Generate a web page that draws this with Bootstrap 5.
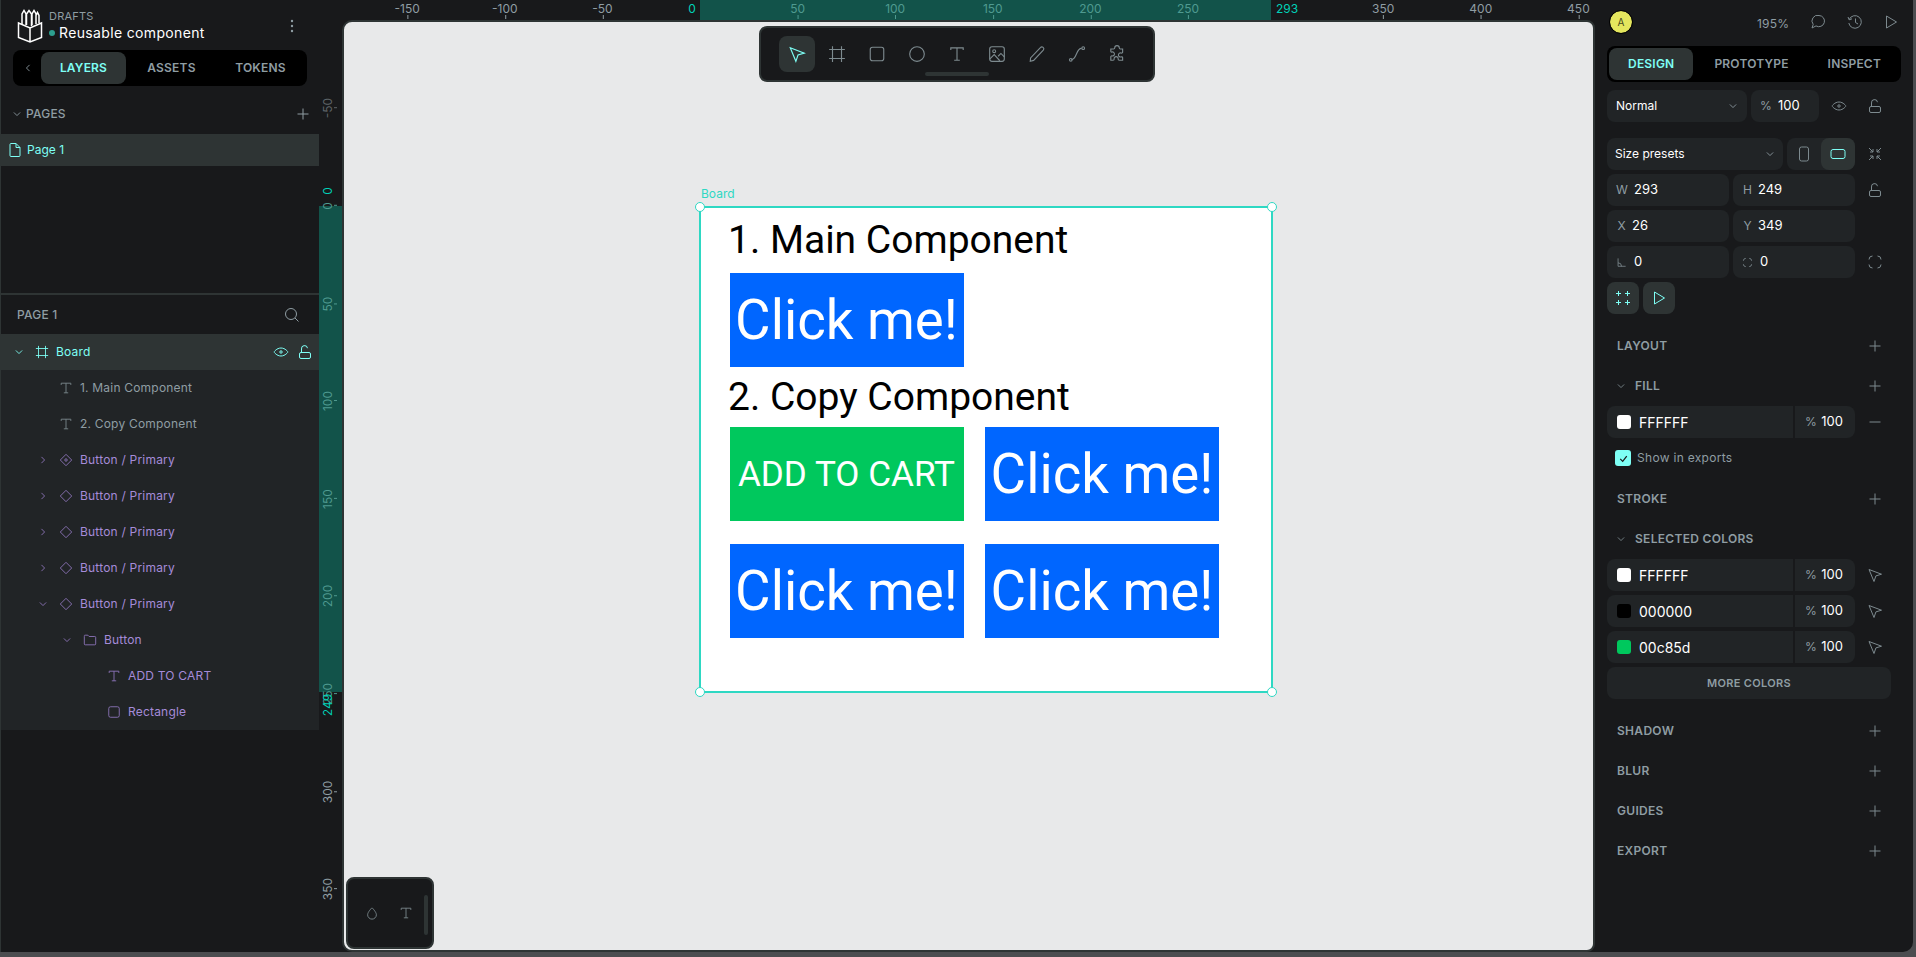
<!DOCTYPE html>
<html lang="en">

<head>
    <meta charset="UTF-8">
    <title>Reusable component</title>
    <link href="https://cdn.jsdelivr.net/npm/bootstrap@5.3.3/dist/css/bootstrap.min.css" rel="stylesheet" crossorigin="anonymous">
    <style>
        html, body { height: 100%; }

        body {
            background: #4c4d50;
            font-family: "Inter", "Liberation Sans", sans-serif;
            font-size: 12px;
            color: #8f9da3;
            overflow: hidden;
        }

        svg.ico { width: 16px; height: 16px; fill: none; stroke: currentColor; stroke-width: 1; flex: none; }
        svg.ico.tiny { width: 10px; height: 10px; stroke-width: 1.4; }

        .app-frame {
            width: 1913px;
            height: 952px;
            background: #18191b;
            border-bottom-right-radius: 10px;
            border-left: 1px solid #2e3434;
            overflow: hidden;
        }

        /* side panels */
        .left-panel { width: 318px; flex: none; }
        .right-panel { width: 318px; flex: none; padding-left: 12px; }
        .mid-area { width: 1276px; flex: none; }

        .file-head { height: 50px; position: relative; }
        .file-logo { position: absolute; left: 16px; top: 9px; width: 26px; height: 34px; color: #fff; }
        .file-folder { position: absolute; left: 48px; top: 9px; font-size: 11px; letter-spacing: .2px; line-height: 14px; }
        .file-name { position: absolute; left: 46px; top: 24px; color: #fff; font-size: 14px; line-height: 18px; letter-spacing: .35px; white-space: nowrap; }
        .file-name i { display: inline-block; width: 6px; height: 6px; border-radius: 50%; background: #2d9f8f; margin: 0 4px 2px 2px; }
        .file-menu { position: absolute; left: 283px; top: 18px; color: #8f9da3; }

        .tab-strip { background: #000; border-radius: 8px; height: 36px; padding: 2px; width: 294px; flex-wrap: nowrap; }
        .tab-strip.on-left { margin-left: 12px; }
        .tab-strip .nav-link {
            height: 32px;
            padding: 0;
            display: flex;
            align-items: center;
            justify-content: center;
            color: #8f9da3;
            font-size: 12px;
            font-weight: 600;
            text-transform: uppercase;
            letter-spacing: .2px;
            border-radius: 8px;
        }
        .tab-strip .nav-link.active { background: #2e3434; color: #7efff5; }

        .tab-back { width: 26px; color: #8f9da3; }
        .tw-85 { width: 85px; }
        .tw-91 { width: 91px; }
        .tw-87 { width: 87px; }
        .tw-116 { width: 117px; }
        .tw-90 { width: 90px; }

        .pages-head { height: 40px; margin-top: 8px; padding: 0 8px 0 11px; }
        .cap-label { font-size: 12px; font-weight: 500; letter-spacing: .2px; text-transform: uppercase; color: #8f9da3; }
        .page-row { height: 32px; background: #2e3434; color: #7efff5; padding-left: 6px; }
        .page-gap { height: 129px; border-bottom: 2px solid #2e3434; }
        .layers-head { height: 39px; padding: 0 19px 0 16px; }

        .lyr-list { background: #212426; }
        .lyr-row { height: 36px; color: #8f9da3; white-space: nowrap; }
        .lyr-row.sel { background: #2e3434; color: #7efff5; }
        .lyr-row.comp { color: #a58bd9; }
        .lyr-row svg.ico { width: 14px; height: 14px; margin: 0 1px; color: #7d8a8f; }
        .lyr-row svg.ico.tiny { width: 10px; height: 10px; margin: 0; }
        .lyr-row.comp svg.ico { color: #8f76bd; }
        .lyr-row.sel svg.ico { color: #7efff5; }
        .lyr-name { margin-left: 6px; letter-spacing: .2px; }
        .lv-0 { padding-left: 11px; }
        .lv-1 { padding-left: 35px; }
        .lv-2 { padding-left: 59px; }
        .lv-3 { padding-left: 83px; }
        .chev-slot { width: 13px; margin-right: 9px; display: flex; justify-content: center; }
        .lyr-tools { margin-left: auto; margin-right: 6px; gap: 8px; }
        .lyr-tools svg.ico { width: 16px !important; height: 16px !important; margin: 0 !important; }

        /* rulers and viewport */
        .ruler-top { height: 20px; position: relative; }
        .ruler-left { width: 23px; position: relative; flex: none; }
        .ruler-band { position: absolute; background: #12534a; }
        .ruler-band.horiz { left: 381px; width: 571px; top: 0; height: 20px; }
        .ruler-band.vert { left: 0; width: 23px; top: 186px; height: 486px; }
        .tick-h, .tick-v { position: absolute; color: #8f9da3; font-size: 12px; line-height: 12px; white-space: nowrap; }
        .tick-h { top: 3px; transform: translateX(-50%); }
        .tick-h::after { content: ""; position: absolute; left: 50%; top: 12px; width: 1px; height: 4px; background: currentColor; }
        .tick-v { left: 9px; transform: translate(-50%, -50%) rotate(-90deg); }
        .tick-v::after { content: ""; position: absolute; left: 50%; top: 12px; width: 1px; height: 3px; background: currentColor; }
        .tick-dim { color: #4f9a90; }
        .tick-low { color: #5f6569; }
        .tick-hit { color: #00d1b8; }
        .tick-hit::after { display: none; }

        .view-box {
            position: relative;
            flex: 1;
            height: 932px;
            background: #e8e9ea;
            border: 2px solid #2e3434;
            border-radius: 10px 8px 8px 10px;
        }

        .art-board {
            position: absolute;
            left: 356px;
            top: 185px;
            width: 572px;
            height: 485px;
            background: #fff;
            outline: 2px solid #2ed8c3;
            outline-offset: -1px;
            padding: 8px 0 0 29.5px;
            font-family: "Roboto", "Liberation Sans", sans-serif;
            color: #000;
        }
        .art-name { position: absolute; left: 1px; top: -20px; font-family: "Inter", sans-serif; font-size: 12px; line-height: 14px; color: #2ed8c3; }
        .art-grip { position: absolute; width: 10px; height: 10px; border-radius: 50%; background: #fff; border: 1.5px solid #2ed8c3; }
        .art-grip.tl { left: -5px; top: -5px; }
        .art-grip.tr { right: -5px; top: -5px; }
        .art-grip.bl { left: -5px; bottom: -5px; }
        .art-grip.br { right: -5px; bottom: -5px; }
        .art-title { font-size: 39px; line-height: 46px; margin: 0 0 0 -1.5px; height: 58px; padding-top: 2px; font-weight: 400; }
        .art-title.second { height: 60px; padding-top: 7px; }
        .art-btn {
            width: 234px;
            height: 94px;
            color: #fff;
            font-size: 54.6px;
            line-height: 94px;
            text-align: center;
            white-space: nowrap;
            background: #0066ff;
        }
        .art-btn.green { background: #00c85d; font-size: 35.1px; }
        .art-grid { display: grid; grid-template-columns: 234px 234px; column-gap: 21.5px; row-gap: 23px; }

        .tool-bar {
            position: absolute;
            left: 415px;
            top: 4px;
            width: 396px;
            height: 56px;
            background: #18191b;
            border: 2px solid #2e3434;
            border-radius: 8px;
            padding: 8px 0 0 18px;
            color: #7d8a8f;
        }
        .tool-btn { width: 36px; height: 36px; margin-right: 4px; border-radius: 8px; }
        .tool-btn svg.ico { width: 18px; height: 18px; }
        .tool-btn.on { background: #2e3434; color: #7efff5; }
        .tool-grab { position: absolute; left: 164px; top: 44px; width: 64px; height: 4px; border-radius: 2px; background: #2e3434; }

        .mini-bar {
            position: absolute;
            left: 2px;
            bottom: 1px;
            width: 88px;
            height: 72px;
            background: #18191b;
            border: 2px solid #2e3434;
            border-radius: 8px;
            color: #7d8a8f;
            padding: 0 0 0 17px;
            gap: 20px;
        }
        .mini-bar svg.ico { width: 14px; height: 14px; }
        .mini-grab { position: absolute; right: 4px; top: 16px; width: 4px; height: 40px; border-radius: 2px; background: #2e3434; }

        /* right panel */
        .top-tools { height: 46px; position: relative; }
        .user-dot {
            position: absolute; left: 3px; top: 11px; width: 22px; height: 22px; border-radius: 50%;
            background: #e4e65e; color: #45461a; font-size: 10px; outline: 1px solid #000;
        }
        .zoom-val { position: absolute; left: 150px; top: 16px; line-height: 16px; letter-spacing: .2px; }
        .top-ico { position: absolute; top: 14px; color: #7d8a8f; }
        .top-ico.t-comment { left: 203px; }
        .top-ico.t-history { left: 240px; }
        .top-ico.t-play { left: 276px; }

        .fld { background: #212426; border-radius: 8px; height: 32px; color: #fff; padding: 0 9px; white-space: nowrap; }
        .fld.fld-tight { padding: 0 8px; }
        .fld-lbl { color: #8f9da3; margin-right: 7px; width: 11px; text-align: center; }
        .fld-lbl.short { margin-right: 5px; }
        svg.ico.fld-svg { width: 11px; height: 11px; color: #8f9da3; margin-right: 7px; }
        svg.ico.sel-chev { color: #8f9da3; }
        .num { font-size: 13px; }
        .act { width: 40px; height: 32px; color: #7d8a8f; flex: none; }
        .act.tuck { margin-left: -4px; }
        .act.tuck-more { margin-left: -8px; }
        .w-140 { width: 140px; }
        .w-68 { width: 68px; }
        .w-176 { width: 176px; }
        .w-122 { width: 122px; }

        .seg-box { width: 68px; height: 32px; background: #212426; border-radius: 8px; color: #7d8a8f; }
        .seg-item { width: 34px; height: 32px; border-radius: 8px; }
        .seg-item.on { background: #2e3434; color: #7efff5; }
        .sq-btn { width: 32px; height: 32px; border-radius: 8px; background: #2e3434; color: #7efff5; }
        .quick-row { margin-bottom: 12px; }

        .sec-head { height: 40px; width: 288px; padding-left: 10px; }
        .sec-head .cap-label { font-weight: 600; letter-spacing: .3px; }
        svg.ico.sec-chev { width: 10px; margin-right: 9px; margin-left: -1px; color: #7d8a8f; }
        .sec-head .act { margin-left: auto; }

        .swatch-row { width: 248px; height: 32px; }
        .swatch-main { width: 186px; height: 32px; background: #212426; border-radius: 8px 0 0 8px; padding-left: 10px; color: #fff; font-size: 14px; }
        .swatch-pct { width: 60px; height: 32px; margin-left: 2px; background: #212426; border-radius: 0 8px 8px 0; padding-left: 10px; color: #fff; }
        .swatch-pct span { color: #8f9da3; margin-right: 1px; }
        .swatch-pct span.num { color: #fff; margin: 0; }
        .swatch-chip { width: 14px; height: 14px; border-radius: 3px; margin-right: 8px; }
        .swatch-chip.green { background: #00c85d; }
        .show-row { height: 32px; margin: 4px 0 5px; padding-left: 8px; letter-spacing: .3px; }
        .check-box { width: 16px; height: 16px; background: #7efff5; border-radius: 3px; color: #18191b; margin-right: 6px; }
        .check-box svg.ico { width: 13px; height: 13px; stroke-width: 1.5; }
        .more-btn {
            width: 284px; height: 32px; background: #212426; color: #8f9da3; border: 0; border-radius: 8px;
            font-size: 11px; font-weight: 600; letter-spacing: .3px; padding: 0; margin: 4px 0 12px;
        }
    </style>
</head>

<body>
    <svg width="0" height="0" class="position-absolute">
        <symbol id="i-down" viewBox="0 0 16 16"><path d="M3 5.5l5 5 5-5"/></symbol>
        <symbol id="i-right" viewBox="0 0 16 16"><path d="M5.5 3l5 5-5 5"/></symbol>
        <symbol id="i-left" viewBox="0 0 16 16"><path d="M10.5 3l-5 5 5 5"/></symbol>
        <symbol id="i-plus" viewBox="0 0 16 16"><path d="M8 2.5v11M2.5 8h11"/></symbol>
        <symbol id="i-minus" viewBox="0 0 16 16"><path d="M2.5 8h11"/></symbol>
        <symbol id="i-eye" viewBox="0 0 16 16"><path d="M1 8s2.6-4 7-4 7 4 7 4-2.6 4-7 4-7-4-7-4z"/><circle cx="8" cy="8" r="1.2"/></symbol>
        <symbol id="i-lock" viewBox="0 0 16 16"><rect x="2.5" y="8.5" width="11" height="6" rx="1.5"/><path d="M4.5 8.5V5a3 3 0 0 1 6-.8"/></symbol>
        <symbol id="i-text" viewBox="0 0 16 16"><path d="M2.5 4.5v-2h11v2M8 2.5v11M5.5 13.5h5"/></symbol>
        <symbol id="i-board" viewBox="0 0 16 16"><path d="M4 1v14M12 1v14M1 4h14M1 12h14"/></symbol>
        <symbol id="i-comp" viewBox="0 0 16 16"><path d="M8 1.5L14.5 8 8 14.5 1.5 8z"/><circle cx="8" cy="8" r="1.4"/></symbol>
        <symbol id="i-copy" viewBox="0 0 16 16"><path d="M8 1.5L14.5 8 8 14.5 1.5 8z"/></symbol>
        <symbol id="i-folder" viewBox="0 0 16 16"><path d="M1.5 4a1 1 0 0 1 1-1.5h3L7 4h6.5a1 1 0 0 1 1 1v7.5a1 1 0 0 1-1 1h-11a1 1 0 0 1-1-1z"/></symbol>
        <symbol id="i-rect" viewBox="0 0 16 16"><rect x="2" y="2" width="12" height="12" rx="2"/></symbol>
        <symbol id="i-page" viewBox="0 0 16 16"><path d="M3 2.5a1 1 0 0 1 1-1h5l4 4v8a1 1 0 0 1-1 1H4a1 1 0 0 1-1-1zM9 1.5v4h4"/></symbol>
        <symbol id="i-search" viewBox="0 0 16 16"><circle cx="7" cy="7" r="5.5"/><path d="M11 11l3.5 3.5"/></symbol>
        <symbol id="i-comment" viewBox="0 0 16 16"><path d="M9 1.5a5.6 5.6 0 1 1-3 10.4L2 14l1.2-3.6A5.6 5.6 0 0 1 9 1.5z"/></symbol>
        <symbol id="i-history" viewBox="0 0 16 16"><path d="M2.2 5.5a6.3 6.3 0 1 1-.4 3.5M1 3l1.2 2.8L5 4.8M8.5 4.5v4l2.5 1.5"/></symbol>
        <symbol id="i-play" viewBox="0 0 16 16"><path d="M3.5 2l10 6-10 6z"/></symbol>
        <symbol id="i-pointer" viewBox="0 0 16 16"><path d="M2 2.5l12.5 4.7-5.6 1.7L7 14.5z"/></symbol>
        <symbol id="i-image" viewBox="0 0 16 16"><rect x="1.5" y="1.5" width="13" height="13" rx="2"/><circle cx="5.5" cy="5.5" r="1.3"/><path d="M1.5 12.5l4-4 5 5.5M9 10l2.5-2.5 3 3"/></symbol>
        <symbol id="i-pen" viewBox="0 0 16 16"><path d="M2 14.5l.3-3L11 2.3a1.7 1.7 0 0 1 2.6 2.3L5 13.7z"/></symbol>
        <symbol id="i-curve" viewBox="0 0 16 16"><path d="M3 13c5 0 4-10 9-10"/><circle cx="2.5" cy="13.2" r="1.2"/><circle cx="13.5" cy="2.8" r="1.2"/></symbol>
        <symbol id="i-puzzle" viewBox="0 0 16 16"><path d="M6 2.5a2 2 0 0 1 4 0c0 .7.5 1 1 1h2v3c0 .6-1 .8-1.5.6a1.8 1.8 0 1 0 0 3.5c.5-.2 1.5 0 1.5.5v2.400H10c-.5 0-1-.3-1-1a1.8 1.8 0 1 0-3.500 0c0 .7-.5 1-1 1H2.500v-3c0-.5.5-1 1-.8a1.800 1.800 0 1 0 0-3.500c-.5.2-1 0-1-.6V3.500H5c.5 0 1-.3 1-1z"/></symbol>
        <symbol id="i-drop" viewBox="0 0 16 16"><path d="M8 2S3 6.8 3 10a5 5 0 0 0 10 0c0-3.200-5-8-5-8z"/></symbol>
        <symbol id="i-shrink" viewBox="0 0 16 16"><path d="M2 2l4 4M6 3v3H3M14 2l-4 4M10 3v3h3M2 14l4-4M6 13v-3H3M14 14l-4-4M10 13v-3h3"/></symbol>
        <symbol id="i-corner" viewBox="0 0 16 16"><path d="M2 5.5A3.500 3.500 0 0 1 5.500 2M10.500 2A3.500 3.500 0 0 1 14 5.500M14 10.500a3.500 3.500 0 0 1-3.500 3.500M5.500 14A3.500 3.500 0 0 1 2 10.500"/></symbol>
        <symbol id="i-angle" viewBox="0 0 16 16"><path d="M3 2v11.500h11M3 8.500a5 5 0 0 1 5 5"/></symbol>
        <symbol id="i-phone" viewBox="0 0 16 16"><rect x="3.5" y="1" width="9" height="14" rx="2"/></symbol>
        <symbol id="i-wide" viewBox="0 0 16 16"><rect x="1" y="3.5" width="14" height="9" rx="2"/></symbol>
        <symbol id="i-marks" viewBox="0 0 16 16"><path d="M3.5 1v5M1 3.500h5M12.500 1v5M10 3.500h5M3.500 10v5M1 12.500h5M12.500 10v5M10 12.500h5"/></symbol>
        <symbol id="i-check" viewBox="0 0 16 16"><path d="M4 8.5l3 3 5-6.500"/></symbol>
    </svg>

    <div class="app-frame d-flex">
        <!-- left panel -->
        <aside class="left-panel">
            <div class="file-head">
                <svg class="file-logo" viewBox="0 0 26 34" fill="none" stroke="currentColor" stroke-width="1.5">
                    <path d="M1.5 14L13 19l11.5-5v14.5L13 33 1.5 28.5zM13 19v14"/>
                    <path d="M5 15V5l2-3.5L9 5v11M9.5 16V5l2.5-3.5L14.5 5v12M15 16V5l2-3.5L19 5v10M19 15V6.5l1.5-3L22 6.500V14"/>
                </svg>
                <div class="file-folder">DRAFTS</div>
                <div class="file-name"><i></i>Reusable component</div>
                <svg class="ico file-menu" viewBox="0 0 16 16"><circle cx="8" cy="3" r="1.2" fill="currentColor" stroke="none"/><circle cx="8" cy="8" r="1.2" fill="currentColor" stroke="none"/><circle cx="8" cy="13" r="1.2" fill="currentColor" stroke="none"/></svg>
            </div>
            <ul class="nav nav-pills tab-strip on-left">
                <li class="tab-back d-flex align-items-center justify-content-center"><svg class="ico tiny"><use href="#i-left"/></svg></li>
                <li class="tw-85"><a class="nav-link active" href="#">Layers</a></li>
                <li class="tw-91"><a class="nav-link" href="#">Assets</a></li>
                <li class="tw-87"><a class="nav-link" href="#">Tokens</a></li>
            </ul>
            <div class="pages-head d-flex align-items-center justify-content-between">
                <span class="d-flex align-items-center gap-1"><svg class="ico tiny"><use href="#i-down"/></svg><span class="cap-label">Pages</span></span>
                <svg class="ico"><use href="#i-plus"/></svg>
            </div>
            <div class="page-row d-flex align-items-center">
                <svg class="ico me-1"><use href="#i-page"/></svg>Page 1
            </div>
            <div class="page-gap"></div>
            <div class="layers-head d-flex align-items-center justify-content-between">
                <span class="cap-label">Page 1</span>
                <svg class="ico"><use href="#i-search"/></svg>
            </div>
            <div class="lyr-list">
                <div class="lyr-row sel lv-0 d-flex align-items-center">
                    <span class="chev-slot"><svg class="ico tiny"><use href="#i-down"/></svg></span>
                    <svg class="ico"><use href="#i-board"/></svg><span class="lyr-name">Board</span>
                    <span class="lyr-tools d-flex"><svg class="ico"><use href="#i-eye"/></svg><svg class="ico"><use href="#i-lock"/></svg></span>
                </div>
                <div class="lyr-row lv-1 d-flex align-items-center"><span class="chev-slot"></span><svg class="ico"><use href="#i-text"/></svg><span class="lyr-name">1. Main Component</span></div>
                <div class="lyr-row lv-1 d-flex align-items-center"><span class="chev-slot"></span><svg class="ico"><use href="#i-text"/></svg><span class="lyr-name">2. Copy Component</span></div>
                <div class="lyr-row comp lv-1 d-flex align-items-center"><span class="chev-slot"><svg class="ico tiny"><use href="#i-right"/></svg></span><svg class="ico"><use href="#i-comp"/></svg><span class="lyr-name">Button / Primary</span></div>
                <div class="lyr-row comp lv-1 d-flex align-items-center"><span class="chev-slot"><svg class="ico tiny"><use href="#i-right"/></svg></span><svg class="ico"><use href="#i-copy"/></svg><span class="lyr-name">Button / Primary</span></div>
                <div class="lyr-row comp lv-1 d-flex align-items-center"><span class="chev-slot"><svg class="ico tiny"><use href="#i-right"/></svg></span><svg class="ico"><use href="#i-copy"/></svg><span class="lyr-name">Button / Primary</span></div>
                <div class="lyr-row comp lv-1 d-flex align-items-center"><span class="chev-slot"><svg class="ico tiny"><use href="#i-right"/></svg></span><svg class="ico"><use href="#i-copy"/></svg><span class="lyr-name">Button / Primary</span></div>
                <div class="lyr-row comp lv-1 d-flex align-items-center"><span class="chev-slot"><svg class="ico tiny"><use href="#i-down"/></svg></span><svg class="ico"><use href="#i-copy"/></svg><span class="lyr-name">Button / Primary</span></div>
                <div class="lyr-row comp lv-2 d-flex align-items-center"><span class="chev-slot"><svg class="ico tiny"><use href="#i-down"/></svg></span><svg class="ico"><use href="#i-folder"/></svg><span class="lyr-name">Button</span></div>
                <div class="lyr-row comp lv-3 d-flex align-items-center"><span class="chev-slot"></span><svg class="ico"><use href="#i-text"/></svg><span class="lyr-name">ADD TO CART</span></div>
                <div class="lyr-row comp lv-3 d-flex align-items-center"><span class="chev-slot"></span><svg class="ico"><use href="#i-rect"/></svg><span class="lyr-name">Rectangle</span></div>
            </div>
        </aside>

        <!-- rulers and canvas -->
        <main class="mid-area">
            <div class="ruler-top" id="ruler-top"><div class="ruler-band horiz"></div></div>
            <div class="d-flex">
                <div class="ruler-left" id="ruler-left"><div class="ruler-band vert"></div></div>
                <div class="view-box">
                    <div class="art-board">
                        <div class="art-name">Board</div>
                        <span class="art-grip tl"></span>
                        <span class="art-grip tr"></span>
                        <span class="art-grip bl"></span>
                        <span class="art-grip br"></span>
                        <h1 class="art-title">1. Main Component</h1>
                        <div class="art-btn">Click me!</div>
                        <h2 class="art-title second">2. Copy Component</h2>
                        <div class="art-grid">
                            <div class="art-btn green">ADD TO CART</div>
                            <div class="art-btn">Click me!</div>
                            <div class="art-btn">Click me!</div>
                            <div class="art-btn">Click me!</div>
                        </div>
                    </div>

                    <div class="tool-bar d-flex">
                        <span class="tool-btn on d-flex align-items-center justify-content-center"><svg class="ico"><use href="#i-pointer"/></svg></span>
                        <span class="tool-btn d-flex align-items-center justify-content-center"><svg class="ico"><use href="#i-board"/></svg></span>
                        <span class="tool-btn d-flex align-items-center justify-content-center"><svg class="ico"><use href="#i-rect"/></svg></span>
                        <span class="tool-btn d-flex align-items-center justify-content-center"><svg class="ico" viewBox="0 0 16 16"><circle cx="8" cy="8" r="6.5"/></svg></span>
                        <span class="tool-btn d-flex align-items-center justify-content-center"><svg class="ico"><use href="#i-text"/></svg></span>
                        <span class="tool-btn d-flex align-items-center justify-content-center"><svg class="ico"><use href="#i-image"/></svg></span>
                        <span class="tool-btn d-flex align-items-center justify-content-center"><svg class="ico"><use href="#i-pen"/></svg></span>
                        <span class="tool-btn d-flex align-items-center justify-content-center"><svg class="ico"><use href="#i-curve"/></svg></span>
                        <span class="tool-btn d-flex align-items-center justify-content-center"><svg class="ico"><use href="#i-puzzle"/></svg></span>
                        <span class="tool-grab"></span>
                    </div>

                    <div class="mini-bar d-flex align-items-center">
                        <svg class="ico"><use href="#i-drop"/></svg>
                        <svg class="ico"><use href="#i-text"/></svg>
                        <span class="mini-grab"></span>
                    </div>
                </div>
            </div>
        </main>

        <!-- right panel -->
        <aside class="right-panel">
            <div class="top-tools">
                <div class="user-dot d-flex align-items-center justify-content-center">A</div>
                <span class="zoom-val">195%</span>
                <svg class="ico top-ico t-comment"><use href="#i-comment"/></svg>
                <svg class="ico top-ico t-history"><use href="#i-history"/></svg>
                <svg class="ico top-ico t-play"><use href="#i-play"/></svg>
            </div>
            <ul class="nav nav-pills tab-strip">
                <li class="tw-85"><a class="nav-link active" href="#">Design</a></li>
                <li class="tw-116"><a class="nav-link" href="#">Prototype</a></li>
                <li class="tw-90"><a class="nav-link" href="#">Inspect</a></li>
            </ul>

            <div class="d-flex gap-1 mt-2">
                <div class="fld w-140 d-flex align-items-center justify-content-between"><span>Normal</span><svg class="ico tiny sel-chev"><use href="#i-down"/></svg></div>
                <div class="fld w-68 d-flex align-items-center"><span class="fld-lbl">%</span><span class="num">100</span></div>
                <span class="act tuck d-flex align-items-center justify-content-center"><svg class="ico"><use href="#i-eye"/></svg></span>
                <span class="act tuck-more d-flex align-items-center justify-content-center"><svg class="ico"><use href="#i-lock"/></svg></span>
            </div>

            <div class="d-flex gap-1 mt-3">
                <div class="fld fld-tight w-176 d-flex align-items-center justify-content-between"><span>Size presets</span><svg class="ico tiny sel-chev"><use href="#i-down"/></svg></div>
                <div class="seg-box d-flex">
                    <span class="seg-item d-flex align-items-center justify-content-center"><svg class="ico"><use href="#i-phone"/></svg></span>
                    <span class="seg-item on d-flex align-items-center justify-content-center"><svg class="ico"><use href="#i-wide"/></svg></span>
                </div>
                <span class="act tuck d-flex align-items-center justify-content-center"><svg class="ico"><use href="#i-shrink"/></svg></span>
            </div>

            <div class="d-flex gap-1 mt-1">
                <div class="fld w-122 d-flex align-items-center"><span class="fld-lbl">W</span><span class="num">293</span></div>
                <div class="fld w-122 d-flex align-items-center"><span class="fld-lbl short">H</span><span class="num">249</span></div>
                <span class="act tuck d-flex align-items-center justify-content-center"><svg class="ico"><use href="#i-lock"/></svg></span>
            </div>
            <div class="d-flex gap-1 mt-1">
                <div class="fld w-122 d-flex align-items-center"><span class="fld-lbl short">X</span><span class="num">26</span></div>
                <div class="fld w-122 d-flex align-items-center"><span class="fld-lbl short">Y</span><span class="num">349</span></div>
            </div>
            <div class="d-flex gap-1 mt-1">
                <div class="fld w-122 d-flex align-items-center"><svg class="ico fld-svg"><use href="#i-angle"/></svg><span class="num">0</span></div>
                <div class="fld w-122 d-flex align-items-center"><svg class="ico fld-svg"><use href="#i-corner"/></svg><span class="num">0</span></div>
                <span class="act tuck d-flex align-items-center justify-content-center"><svg class="ico"><use href="#i-corner"/></svg></span>
            </div>
            <div class="d-flex gap-1 mt-1 quick-row">
                <span class="sq-btn d-flex align-items-center justify-content-center"><svg class="ico"><use href="#i-marks"/></svg></span>
                <span class="sq-btn d-flex align-items-center justify-content-center"><svg class="ico"><use href="#i-play"/></svg></span>
            </div>

            <div class="sec-head d-flex align-items-center"><span class="cap-label">Layout</span><span class="act d-flex align-items-center justify-content-center"><svg class="ico"><use href="#i-plus"/></svg></span></div>
            <div class="sec-head d-flex align-items-center"><svg class="ico tiny sec-chev"><use href="#i-down"/></svg><span class="cap-label">Fill</span><span class="act d-flex align-items-center justify-content-center"><svg class="ico"><use href="#i-plus"/></svg></span></div>

            <div class="d-flex align-items-center">
                <div class="swatch-row d-flex">
                    <div class="swatch-main d-flex align-items-center"><span class="swatch-chip bg-white"></span>FFFFFF</div>
                    <div class="swatch-pct d-flex align-items-center"><span>%&nbsp;</span><span class="num">100</span></div>
                </div>
                <span class="act d-flex align-items-center justify-content-center"><svg class="ico"><use href="#i-minus"/></svg></span>
            </div>
            <div class="show-row d-flex align-items-center">
                <span class="check-box d-flex align-items-center justify-content-center"><svg class="ico"><use href="#i-check"/></svg></span>Show in exports
            </div>

            <div class="sec-head d-flex align-items-center"><span class="cap-label">Stroke</span><span class="act d-flex align-items-center justify-content-center"><svg class="ico"><use href="#i-plus"/></svg></span></div>
            <div class="sec-head d-flex align-items-center"><svg class="ico tiny sec-chev"><use href="#i-down"/></svg><span class="cap-label">Selected colors</span></div>

            <div class="d-flex flex-column gap-1">
                <div class="d-flex align-items-center">
                    <div class="swatch-row d-flex">
                        <div class="swatch-main d-flex align-items-center"><span class="swatch-chip bg-white"></span>FFFFFF</div>
                        <div class="swatch-pct d-flex align-items-center"><span>%&nbsp;</span><span class="num">100</span></div>
                    </div>
                    <span class="act d-flex align-items-center justify-content-center"><svg class="ico"><use href="#i-pointer"/></svg></span>
                </div>
                <div class="d-flex align-items-center">
                    <div class="swatch-row d-flex">
                        <div class="swatch-main d-flex align-items-center"><span class="swatch-chip bg-black"></span>000000</div>
                        <div class="swatch-pct d-flex align-items-center"><span>%&nbsp;</span><span class="num">100</span></div>
                    </div>
                    <span class="act d-flex align-items-center justify-content-center"><svg class="ico"><use href="#i-pointer"/></svg></span>
                </div>
                <div class="d-flex align-items-center">
                    <div class="swatch-row d-flex">
                        <div class="swatch-main d-flex align-items-center"><span class="swatch-chip green"></span>00c85d</div>
                        <div class="swatch-pct d-flex align-items-center"><span>%&nbsp;</span><span class="num">100</span></div>
                    </div>
                    <span class="act d-flex align-items-center justify-content-center"><svg class="ico"><use href="#i-pointer"/></svg></span>
                </div>
            </div>
            <button class="btn more-btn d-block text-uppercase">More colors</button>

            <div class="sec-head d-flex align-items-center"><span class="cap-label">Shadow</span><span class="act d-flex align-items-center justify-content-center"><svg class="ico"><use href="#i-plus"/></svg></span></div>
            <div class="sec-head d-flex align-items-center"><span class="cap-label">Blur</span><span class="act d-flex align-items-center justify-content-center"><svg class="ico"><use href="#i-plus"/></svg></span></div>
            <div class="sec-head d-flex align-items-center"><span class="cap-label">Guides</span><span class="act d-flex align-items-center justify-content-center"><svg class="ico"><use href="#i-plus"/></svg></span></div>
            <div class="sec-head d-flex align-items-center"><span class="cap-label">Export</span><span class="act d-flex align-items-center justify-content-center"><svg class="ico"><use href="#i-plus"/></svg></span></div>
        </aside>
    </div>

    <script>
        // ruler numbers, 195% zoom. origin of the board is at 381px / 186px inside the rulers
        const scale = 1.952;
        const topRuler = document.getElementById('ruler-top');
        const leftRuler = document.getElementById('ruler-left');

        function addTick(parent, cls, text, prop, pos) {
            const t = document.createElement('span');
            t.className = cls;
            t.textContent = text;
            t.style[prop] = pos + 'px';
            parent.appendChild(t);
        }

        for (let v = -150; v <= 450; v += 50) {
            if (v === 0 || v === 300) continue;
            const inBand = v > 0 && v <= 250;
            addTick(topRuler, 'tick-h' + (inBand ? ' tick-dim' : ''), v, 'left', 381 + v * scale);
        }
        addTick(topRuler, 'tick-h tick-hit', '0', 'left', 373);
        addTick(topRuler, 'tick-h tick-hit', '293', 'left', 968);

        for (let v = -50; v <= 350; v += 50) {
            const inBand = v >= 0 && v <= 250;
            addTick(leftRuler, 'tick-v' + (inBand ? ' tick-dim' : '') + (v < 0 ? ' tick-low' : ''), v, 'top', 186 + v * scale);
        }
        addTick(leftRuler, 'tick-v tick-hit', '0', 'top', 171);
        addTick(leftRuler, 'tick-v tick-hit', '249', 'top', 685);
    </script>
    <script src="https://cdn.jsdelivr.net/npm/bootstrap@5.3.3/dist/js/bootstrap.bundle.min.js" crossorigin="anonymous"></script>
</body>

</html>
